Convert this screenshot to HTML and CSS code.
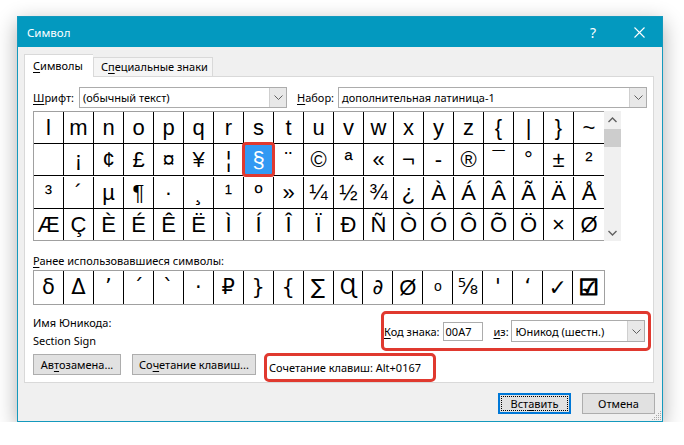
FILE: index.html
```html
<!DOCTYPE html>
<html lang="ru">
<head>
<meta charset="utf-8">
<title>Символ</title>
<link rel="stylesheet" href="styles.css">
</head>
<body>
<div class="dialog">
  <div class="titlebar">
    <span class="title">Символ</span>
    <div class="tb-btns">
      <span class="tb-btn help">?</span>
      <span class="tb-btn close"><svg width="11" height="11" viewBox="0 0 11 11"><path d="M0.5 0.5 L10.5 10.5 M10.5 0.5 L0.5 10.5" stroke="#fff" stroke-width="1.1" fill="none"/></svg></span>
    </div>
  </div>
  <div class="body">
    <div class="tabs">
      <div class="tab active"><u>С</u>имволы</div>
      <div class="tab">С<u>п</u>ециальные знаки</div>
    </div>
    <div class="panel">
      <div class="font-row">
        <span class="lbl"><u>Ш</u>рифт:</span>
        <div class="select font-sel"><span class="val">(обычный текст)</span><span class="drop"><svg width="9" height="5" viewBox="0 0 9 5"><path d="M0.5 0.5 L4.5 4.5 L8.5 0.5" stroke="#606060" fill="none"/></svg></span></div>
        <span class="lbl set-lbl"><u>Н</u>абор:</span>
        <div class="select set-sel"><span class="val">дополнительная латиница-1</span><span class="drop"><svg width="9" height="5" viewBox="0 0 9 5"><path d="M0.5 0.5 L4.5 4.5 L8.5 0.5" stroke="#606060" fill="none"/></svg></span></div>
      </div>
      <div class="grid-wrap">
        <div class="grid">
          <span class="cell">l</span><span class="cell">m</span><span class="cell">n</span><span class="cell">o</span><span class="cell">p</span><span class="cell">q</span><span class="cell">r</span><span class="cell">s</span><span class="cell">t</span><span class="cell">u</span><span class="cell">v</span><span class="cell">w</span><span class="cell">x</span><span class="cell">y</span><span class="cell">z</span><span class="cell">{</span><span class="cell">|</span><span class="cell">}</span><span class="cell">~</span>
          <span class="cell">&nbsp;</span><span class="cell">¡</span><span class="cell">¢</span><span class="cell">£</span><span class="cell">¤</span><span class="cell">¥</span><span class="cell">¦</span><span class="cell selected">§</span><span class="cell">¨</span><span class="cell">©</span><span class="cell">ª</span><span class="cell">«</span><span class="cell">¬</span><span class="cell">-</span><span class="cell">®</span><span class="cell">¯</span><span class="cell">°</span><span class="cell">±</span><span class="cell">²</span>
          <span class="cell">³</span><span class="cell">´</span><span class="cell">µ</span><span class="cell">¶</span><span class="cell">·</span><span class="cell">¸</span><span class="cell">¹</span><span class="cell">º</span><span class="cell">»</span><span class="cell">¼</span><span class="cell">½</span><span class="cell">¾</span><span class="cell">¿</span><span class="cell">À</span><span class="cell">Á</span><span class="cell">Â</span><span class="cell">Ã</span><span class="cell">Ä</span><span class="cell">Å</span>
          <span class="cell">Æ</span><span class="cell">Ç</span><span class="cell">È</span><span class="cell">É</span><span class="cell">Ê</span><span class="cell">Ë</span><span class="cell">Ì</span><span class="cell">Í</span><span class="cell">Î</span><span class="cell">Ï</span><span class="cell">Ð</span><span class="cell">Ñ</span><span class="cell">Ò</span><span class="cell">Ó</span><span class="cell">Ô</span><span class="cell">Õ</span><span class="cell">Ö</span><span class="cell">×</span><span class="cell">Ø</span>
        </div>
        <div class="scrollbar">
          <span class="sb-arrow"><svg width="9" height="6" viewBox="0 0 9 6"><path d="M0.5 5 L4.5 1 L8.5 5" stroke="#606060" stroke-width="1.4" fill="none"/></svg></span>
          <span class="sb-thumb"></span>
          <span class="sb-track"></span>
          <span class="sb-arrow"><svg width="9" height="6" viewBox="0 0 9 6"><path d="M0.5 1 L4.5 5 L8.5 1" stroke="#606060" stroke-width="1.4" fill="none"/></svg></span>
        </div>
      </div>
      <div class="recent-label"><u>Р</u>анее использовавшиеся символы:</div>
      <div class="recent">
        <span class="rc">δ</span><span class="rc">Δ</span><span class="rc">ʼ</span><span class="rc">´</span><span class="rc">`</span><span class="rc">·</span><span class="rc">₽</span><span class="rc">}</span><span class="rc">{</span><span class="rc">∑</span><span class="rc">Ɋ</span><span class="rc">∂</span><span class="rc sans">Ø</span><span class="rc small">o</span><span class="rc">⅝</span><span class="rc">'</span><span class="rc">‘</span><span class="rc heavy">✓</span><span class="rc heavy box">☑</span>
      </div>
      <div class="info-row">
        <div class="names">
          <div>Имя Юникода:</div>
          <div>Section Sign</div>
        </div>
        <div class="code-box hl">
          <span class="lbl"><u>К</u>од знака:</span>
          <span class="input">00A7</span>
          <span class="lbl from-lbl"><u>и</u>з:</span>
          <div class="select from-sel"><span class="val">Юникод (шестн.)</span><span class="drop"><svg width="9" height="5" viewBox="0 0 9 5"><path d="M0.5 0.5 L4.5 4.5 L8.5 0.5" stroke="#606060" fill="none"/></svg></span></div>
        </div>
      </div>
      <div class="btn-row">
        <span class="btn autocorr">Ав<u>т</u>озамена...</span>
        <span class="btn shortcut-btn">Со<u>ч</u>етание клавиш...</span>
        <div class="shortcut hl">Сочетание клавиш: Alt+0167</div>
      </div>
    </div>
    <div class="footer">
      <span class="btn primary"><span class="focus">Вст<u>а</u>вить</span></span>
      <span class="btn">Отмена</span>
    </div>
    <svg class="grip" width="11" height="11" viewBox="0 0 11 11">
      <g fill="#a8a8a8">
        <rect x="9" y="1" width="1" height="1"/>
        <rect x="7" y="3" width="1" height="1"/><rect x="9" y="3" width="1" height="1"/>
        <rect x="5" y="5" width="1" height="1"/><rect x="7" y="5" width="1" height="1"/><rect x="9" y="5" width="1" height="1"/>
        <rect x="3" y="7" width="1" height="1"/><rect x="5" y="7" width="1" height="1"/><rect x="7" y="7" width="1" height="1"/><rect x="9" y="7" width="1" height="1"/>
        <rect x="1" y="9" width="1" height="1"/><rect x="3" y="9" width="1" height="1"/><rect x="5" y="9" width="1" height="1"/><rect x="7" y="9" width="1" height="1"/><rect x="9" y="9" width="1" height="1"/>
      </g>
    </svg>
  </div>
</div>
</body>
</html>
```

FILE: styles.css
```css
* { box-sizing: border-box; }
html, body { margin: 0; padding: 0; background: #ffffff; }
body {
  font-family: "Noto Sans", "Liberation Sans", sans-serif;
  font-size: 11px;
  color: #000;
}
u { text-decoration: underline; text-underline-offset: 2px; }

.dialog {
  margin: 16px 0 0 17px;
  width: 646px;
  height: 406px;
  border: 1px solid #1499bd;
  background: #f0f0f0;
  box-shadow: 0 6px 20px rgba(0,0,0,0.32);
  display: flex;
  flex-direction: column;
}

.titlebar {
  height: 30px;
  background: #0399bf;
  color: #fff;
  display: flex;
  align-items: center;
  padding-left: 9px;
}
.title { font-size: 11.5px; flex: 1; }
.tb-btns { display: flex; height: 100%; }
.tb-btn {
  width: 46px;
  height: 100%;
  display: flex;
  align-items: center;
  justify-content: center;
}
.help { font-size: 14px; }

.body {
  flex: 1;
  position: relative;
  padding: 7px 8px 0 6px;
}

.tabs {
  display: flex;
  align-items: flex-end;
  height: 22px;
  position: relative;
  z-index: 1;
}
.tab {
  height: 19px;
  border: 1px solid #d9d9d9;
  border-bottom: none;
  background: #f5f5f5;
  display: flex;
  align-items: center;
  white-space: nowrap;
  line-height: 16px;
}
.tab.active {
  height: 23px;
  margin-bottom: -1px;
  background: #fff;
  border-right: none;
  width: 69px;
  padding-left: 8px;
}
.tab:not(.active) { width: 120px; padding-left: 7px; }

.panel {
  background: #fff;
  border: 1px solid #d9d9d9;
  height: 307px;
  padding: 0 6px 0 8px;
  display: flex;
  flex-direction: column;
}

.font-row {
  display: flex;
  align-items: center;
  margin-top: 10px;
  height: 21px;
}
.lbl { white-space: nowrap; }
.font-row .lbl { width: 46px; }
.font-row .set-lbl { margin-left: 10px; width: 41px; }

.select {
  height: 21px;
  border: 1px solid #acacac;
  background: #fff;
  display: flex;
  align-items: center;
  padding-left: 3px;
}
.select .val { flex: 1; white-space: nowrap; }
.select .drop {
  width: 17px;
  height: 19px;
  background: #e8e8e8;
  border-left: 1px solid #cfcfcf;
  display: flex;
  align-items: center;
  justify-content: center;
}
.font-sel { width: 208px; }
.set-sel { flex: 1; }

.grid-wrap {
  display: flex;
  margin-top: 3px;
}
.grid {
  display: grid;
  grid-template-columns: repeat(19, 30px);
  border: 1px solid #a0a0a0;
  border-right: none;
  width: 571px;
}
.cell {
  height: 32px;
  border-right: 1px solid #000;
  border-bottom: 1px solid #000;
  font-family: "Liberation Sans", Arial, sans-serif;
  font-size: 22px;
  line-height: 31px;
  text-align: center;
  color: #000;
  position: relative;
}
.grid .cell:nth-child(19n) { border-right: none; }
.grid .cell:nth-last-child(-n+19) { border-bottom: none; height: 31px; }
.cell.selected {
  background: #3399f3;
  color: #fff;
}
.cell.selected::before {
  content: "";
  position: absolute;
  inset: 0 0 0 0;
  border-right: 1px dotted #000;
  border-bottom: 1px dotted #000;
}
.cell.selected::after {
  content: "";
  position: absolute;
  inset: -2px -2px -2px -2px;
  border: 3px solid #e0392f;
  border-radius: 4px;
}

.scrollbar {
  width: 17px;
  background: #f0f0f0;
  display: flex;
  flex-direction: column;
  height: 130px;
}
.sb-arrow {
  height: 17px;
  display: flex;
  align-items: center;
  justify-content: center;
}
.sb-thumb {
  height: 18px;
  background: #cdcdcd;
  margin-top: 1px;
}
.sb-track { flex: 1; }

.recent-label {
  margin-top: 12px;
  line-height: 16px;
  height: 16px;
}
.recent {
  display: flex;
  margin-top: 1px;
  border: 1px solid #a0a0a0;
  width: 572px;
  height: 35px;
}
.rc {
  width: 30px;
  height: 33px;
  border-right: 1px solid #000;
  font-family: "DejaVu Sans", "Liberation Sans", sans-serif;
  font-size: 21px;
  line-height: 33px;
  text-align: center;
  overflow: hidden;
}
.rc:last-child { border-right: none; width: 31px; }
.rc.sans { font-family: "Liberation Sans", sans-serif; font-size: 22px; }
.rc.small { font-size: 14px; font-family: "Liberation Sans", sans-serif; line-height: 30px; }
.rc.heavy { font-weight: 700; font-size: 22px; }
.rc.box { -webkit-text-stroke: 1.2px #000; }

.info-row {
  display: flex;
  justify-content: space-between;
  margin-top: 6px;
  height: 40px;
}
.names div { line-height: 18px; }
.names { padding-top: 3px; }

.hl {
  border: 3px solid #e0392f;
  border-radius: 5px;
}
.code-box {
  width: 270px;
  margin-right: -4px;
  display: flex;
  align-items: center;
  padding: 0 3px 0 0;
}
.input {
  margin-left: 3px;
  width: 41px;
  height: 19px;
  border: 1px solid #acacac;
  padding-left: 2px;
  line-height: 17px;
}
.from-lbl { margin-left: 10px; width: 18px; }
.from-sel { height: 22px; width: 134px; margin-left: auto; }
.from-sel .drop { height: 20px; }

.btn-row {
  display: flex;
  align-items: flex-start;
  margin-top: 2px;
  height: 29px;
}
.btn {
  height: 21px;
  background: #e1e1e1;
  border: 1px solid #adadad;
  display: inline-flex;
  align-items: center;
  justify-content: center;
  white-space: nowrap;
}
.btn-row .btn { margin-top: 1px; }
.autocorr { width: 88px; }
.shortcut-btn { width: 124px; margin-left: 11px; }
.shortcut {
  margin-left: 8px;
  width: 172px;
  height: 29px;
  padding-left: 2px;
  display: flex;
  align-items: center;
  white-space: nowrap;
}

.footer {
  display: flex;
  justify-content: flex-end;
  gap: 11px;
  margin-top: 10px;
  margin-right: -1px;
}
.footer .btn { width: 73px; }
.btn.primary {
  border: 2px solid #0078d7;
  padding: 1px;
}
.btn.primary .focus {
  width: 100%;
  height: 100%;
  border: 1px dotted #000;
  display: flex;
  align-items: center;
  justify-content: center;
}
.grip {
  position: absolute;
  right: 0;
  bottom: 0;
}
```
